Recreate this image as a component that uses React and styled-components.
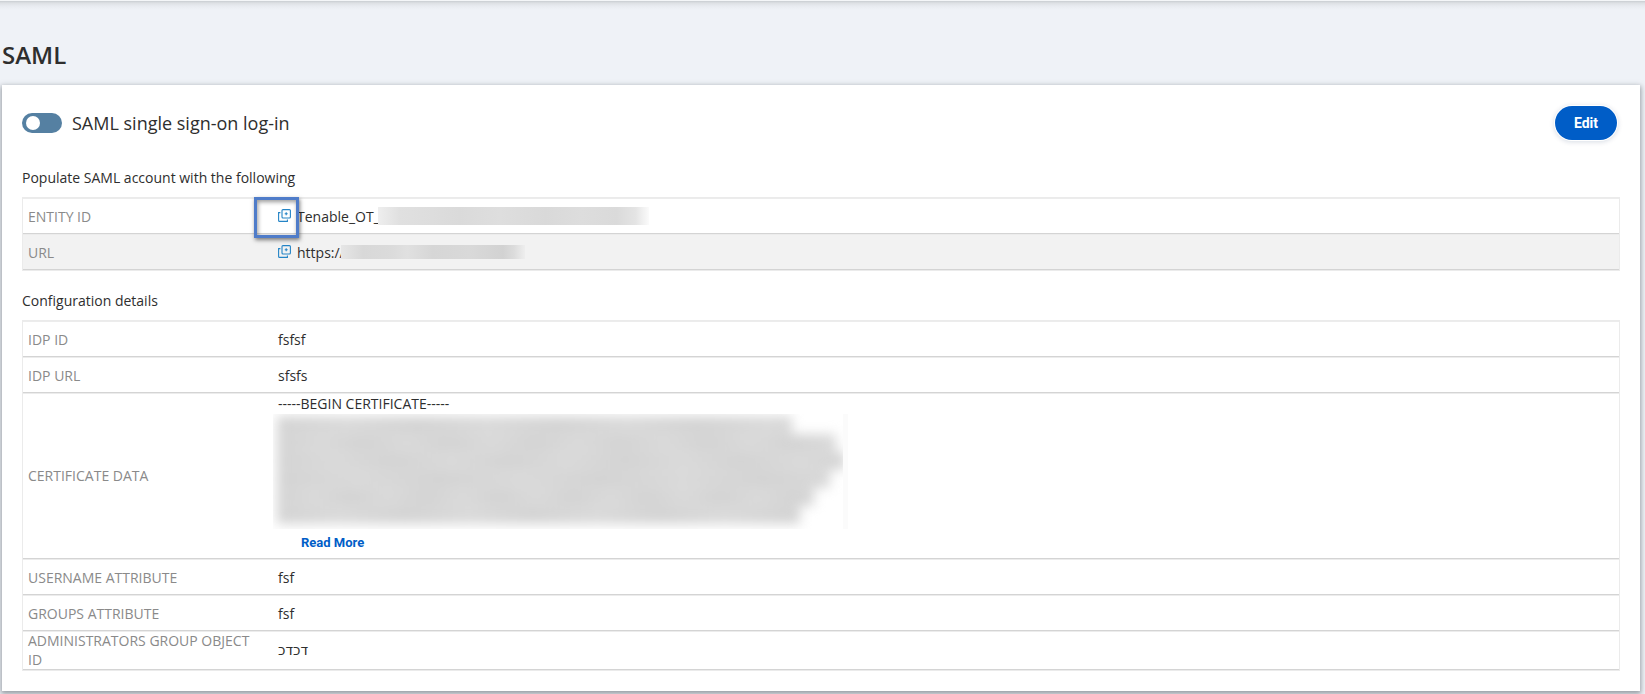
import React from "react";
import styled, { createGlobalStyle } from "styled-components";

const Global = createGlobalStyle`
  * { box-sizing: border-box; }
  body {
    margin: 0;
    background: #eff2f7;
    color: #2e2e2e;
    font: 14px/19px "Open Sans", "Noto Sans", sans-serif;
  }
`;

const Page = styled.div`
  display: flex;
  flex-direction: column;
  padding: 0 5px 3px 2px;
  border-top: 1px solid #f4f6f8;
  background: linear-gradient(#c9cdd1, #dde0e4 2px, #e8ebf0 5px, #eff2f7 9px);
`;

const Title = styled.h1`
  margin: 36px 0 12px;
  font-size: 24px;
  line-height: 36px;
  font-weight: 600;
`;

const Card = styled.main`
  background: #fff;
  padding: 20px;
  box-shadow: 0 2px 5px 1px rgba(80, 88, 95, 0.55);
`;

const Header = styled.header`
  display: flex;
  align-items: center;
  justify-content: space-between;
  padding: 1px 3px 0 0;
  margin-bottom: 28px;
`;

const SwitchLabel = styled.label`
  display: flex;
  align-items: center;
  gap: 10px;
  font-size: 18px;
  line-height: 24px;
`;

const Switch = styled.input`
  appearance: none;
  display: flex;
  align-items: center;
  width: 40px;
  height: 20px;
  margin: 0;
  padding: 0 4px;
  border-radius: 10px;
  background: #5580a2;

  &::before {
    content: "";
    width: 14px;
    height: 14px;
    border-radius: 50%;
    background: #fff;
  }

  &:checked {
    justify-content: flex-end;
    background: #005dc7;
  }
`;

const PrimaryButton = styled.button`
  height: 34px;
  padding: 0 19px;
  border: 0;
  border-radius: 17px;
  background: #005dc7;
  color: #fff;
  font: 700 14px/20px Roboto, sans-serif;
  box-shadow: 0 0 0 1px #fff, 0 1px 5px 1px rgba(0, 40, 90, 0.16);
`;

const LinkButton = styled.button`
  display: block;
  padding: 0 23px;
  margin-top: 4px;
  border: 0;
  background: none;
  color: #005dc7;
  font: 700 13px/20px Roboto, sans-serif;
`;

const DetailsTable = styled.table`
  width: 100%;
  table-layout: fixed;
  border: 1px solid #ebebeb;
  border-spacing: 0;

  & + & {
    margin-top: 20px;
  }
`;

const Caption = styled.caption`
  text-align: left;
  padding-bottom: 10px;
`;

const Row = styled.tr`
  background: ${(p) => (p.$shaded ? "#f2f2f2" : "#fff")};

  > * {
    height: 36px;
    padding: ${(p) => (p.$compact ? 0 : 2)}px 5px 0;
    border-bottom: 1px solid #d4d4d4;
    box-shadow: inset 0 1px #ececec;
    text-align: left;
    vertical-align: middle;
  }
`;

const Name = styled.th`
  width: 250px;
  && { padding-right: 16px; }
  font-weight: 400;
  color: #8a8a8a;
  text-transform: uppercase;
`;

const CopyLine = styled.div`
  display: flex;
  align-items: center;
`;

const CopyButton = styled.button`
  position: relative;
  display: flex;
  width: 13px;
  height: 19px;
  margin-right: 6px;
  padding: 2px 0 0;
  border: 0;
  background: none;
  color: #2484c6;
`;

const Highlight = styled.span`
  position: absolute;
  z-index: 1;
  top: -10px;
  left: -24px;
  width: 45px;
  height: 41px;
  border: 3px solid #4f7cc9;
  box-shadow: 1px 2px 4px rgba(0, 0, 0, 0.5), inset 1px 2px 4px rgba(0, 0, 0, 0.4);
  pointer-events: none;
`;

const Prefix = styled.span`
  width: ${(p) => p.$width}px;
  white-space: nowrap;
`;

const Mask = styled.span`
  position: relative;
  width: ${(p) => p.$width}px;
  height: ${(p) => p.$height}px;
  margin-bottom: 2px;
  background: ${(p) => p.$tones};
`;

const maskTones = {
  entity:
    "linear-gradient(90deg, #eeeeee, #e0e0e0 8%, #dddddd 20%, #dadada 30%, #dedede 45%, #d9d9d9 62%, #dddddd 75%, #dadada 88%, #e4e4e4 95%, #fbfbfb)",
  url: "linear-gradient(90deg, #e6e6e6, #d8d8d8 12%, #dbdbdb 28%, #e0e0e0 36%, #d6d6d6 50%, #d9d9d9 70%, #d2d2d2 88%, #dcdcdc 94%, #eeeeee)",
};

const Certificate = styled.div`
  padding: 1px 0 5px;
`;

const CertificateMask = styled.div`
  width: 575px;
  height: 115px;
  margin: 1px 0 0 -5px;
  overflow: hidden;
  border-right: 5px solid #fbfbfb;
`;

const MaskedLines = styled.div`
  padding: 2px 0 0 4px;
  filter: blur(6px);
`;

const MaskedLine = styled.div`
  width: ${(p) => p.$width}px;
  height: 18px;
  background:
    linear-gradient(transparent, #00000005 50%, transparent),
    repeating-linear-gradient(90deg, #d6d6d6, #dcdcdc ${(p) => p.$wave}px, #d6d6d6 ${(p) => p.$wave * 2}px);
`;

const certificateLines = [
  { width: 515, wave: 70 },
  { width: 559, wave: 43 },
  { width: 568, wave: 58 },
  { width: 553, wave: 81 },
  { width: 537, wave: 37 },
  { width: 523, wave: 64 },
];

const HebrewValue = styled.bdi`
  font-family: "DejaVu Sans", sans-serif;
`;

function CopyIcon() {
  return (
    <svg width="13" height="13" viewBox="0 0 13 13" fill="none" stroke="currentColor" strokeWidth="1.1" aria-hidden="true">
      <rect x="4" y="0.6" width="8.4" height="8.4" rx="1" />
      <path d="M2.4 3.6H0.6V11.4a1 1 0 0 0 1 1H9.4V10.6" />
      <path d="M8.2 3.3V6.3M6.7 4.8H9.7" />
    </svg>
  );
}

function Field({ name, shaded, compact, children }) {
  return (
    <Row $shaded={shaded} $compact={compact}>
      <Name scope="row">{name}</Name>
      <td>{children}</td>
    </Row>
  );
}

export default function App() {
  return (
    <>
      <Global />
      <Page>
        <Title>SAML</Title>
        <Card>
          <Header>
            <SwitchLabel>
              <Switch type="checkbox" role="switch" />
              SAML single sign-on log-in
            </SwitchLabel>
            <PrimaryButton type="button">Edit</PrimaryButton>
          </Header>

          <DetailsTable>
            <Caption>Populate SAML account with the following</Caption>
            <tbody>
              <Field name="Entity ID">
                <CopyLine>
                  <CopyButton type="button" aria-label="Copy entity ID">
                    <CopyIcon />
                    <Highlight />
                  </CopyButton>
                  <Prefix $width={81}>Tenable_OT_</Prefix>
                  <Mask $width={271} $height={18} $tones={maskTones.entity} />
                </CopyLine>
              </Field>
              <Field name="URL" shaded>
                <CopyLine>
                  <CopyButton type="button" aria-label="Copy URL">
                    <CopyIcon />
                  </CopyButton>
                  <Prefix $width={44}>https://</Prefix>
                  <Mask $width={184} $height={14} $tones={maskTones.url} />
                </CopyLine>
              </Field>
            </tbody>
          </DetailsTable>

          <DetailsTable>
            <Caption>Configuration details</Caption>
            <tbody>
              <Field name="IDP ID">fsfsf</Field>
              <Field name="IDP URL">sfsfs</Field>
              <Field name="Certificate data" compact>
                <Certificate>
                  -----BEGIN CERTIFICATE-----
                  <CertificateMask>
                    <MaskedLines>
                      {certificateLines.map((line) => (
                        <MaskedLine key={line.width} $width={line.width} $wave={line.wave} />
                      ))}
                    </MaskedLines>
                  </CertificateMask>
                  <LinkButton type="button">Read More</LinkButton>
                </Certificate>
              </Field>
              <Field name="Username attribute">fsf</Field>
              <Field name="Groups attribute">fsf</Field>
              <Field name="Administrators group object ID" compact>
                <HebrewValue lang="he">דכדכ</HebrewValue>
              </Field>
            </tbody>
          </DetailsTable>
        </Card>
      </Page>
    </>
  );
}
